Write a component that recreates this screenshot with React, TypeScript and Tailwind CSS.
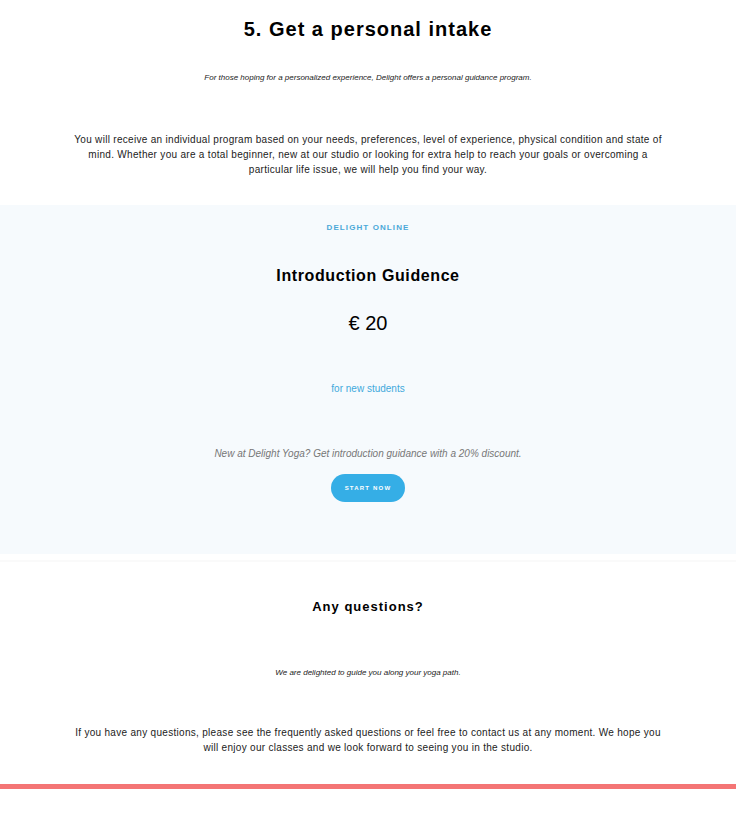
const App = () => {
  return (
    <div className="min-h-[817px] bg-white text-black" style={{ fontFamily: '"Liberation Sans", Arial, sans-serif' }}>
      <div className="flex flex-col items-center pt-[17px]">
        <h1 className="text-[20px] leading-[24px] font-bold tracking-[1px]">5. Get a personal intake</h1>
        <p className="mt-[31px] text-[8px] leading-[12px] italic text-[#222]">
          For those hoping for a personalized experience, Delight offers a personal guidance program.
        </p>
        <p className="mt-[48px] max-w-[600px] text-center text-[10px] leading-[15px] tracking-[0.3px] text-[#222]">
          You will receive an individual program based on your needs, preferences, level of experience, physical condition and state of mind. Whether you are a total beginner, new at our studio or looking for extra help to reach your goals or overcoming a particular life issue, we will help you find your way.
        </p>
      </div>

      <div className="mt-[28px] flex flex-col items-center bg-[#f6fafd] pt-[17px] pb-[52px]">
        <div className="text-[8px] leading-[12px] font-bold tracking-[1.1px] text-[#4aa8d8]">DELIGHT ONLINE</div>
        <h2 className="mt-[32px] text-[16px] leading-[20px] font-bold tracking-[0.6px]">Introduction Guidence</h2>
        <div className="mt-[25px] text-[20px] leading-[24px]">€ 20</div>
        <div className="mt-[47px] text-[10px] leading-[14px] text-[#3fa9dc]">for new students</div>
        <p className="mt-[51px] text-[10px] leading-[14px] italic text-[#777]">
          New at Delight Yoga? Get introduction guidance with a 20% discount.
        </p>
        <button className="mt-[13px] h-[28px] w-[74px] rounded-full bg-[#35aee6] text-[6px] font-bold tracking-[1.2px] text-white">
          START NOW
        </button>
      </div>

      <div className="mt-[6px] h-[2px] bg-[#fafafa]"></div>

      <div className="flex flex-col items-center">
        <h3 className="mt-[37px] text-[13px] leading-[16px] font-bold tracking-[1px]">Any questions?</h3>
        <p className="mt-[52px] text-[8px] leading-[12px] italic text-[#222]">
          We are delighted to guide you along your yoga path.
        </p>
        <p className="mt-[46px] max-w-[600px] text-center text-[10px] leading-[15px] tracking-[0.3px] text-[#222]">
          If you have any questions, please see the frequently asked questions or feel free to contact us at any moment. We hope you will enjoy our classes and we look forward to seeing you in the studio.
        </p>
      </div>

      <div className="mt-[29px] h-[5px] bg-[#f47575]"></div>
    </div>
  )
}

export default App
